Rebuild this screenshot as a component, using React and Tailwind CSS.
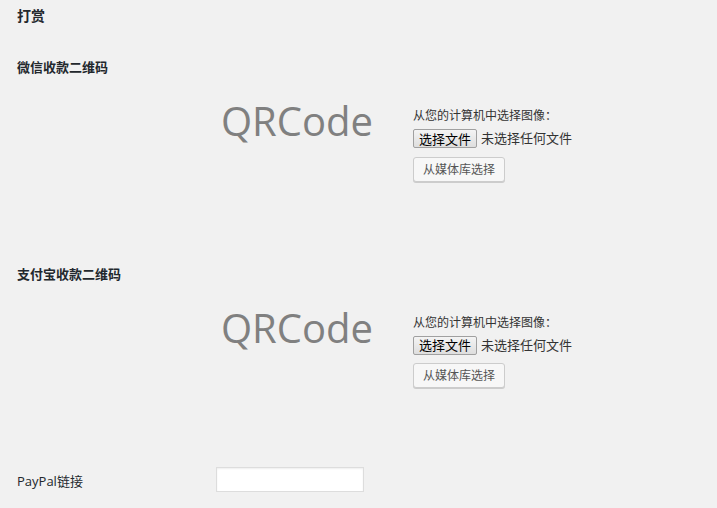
import React from "react";

const QrSection = ({ title }) => {
  return (
    <div>
      <div className="h-[20px] leading-[20px] text-[13px] font-bold">{title}</div>
      <div className="mt-[21px] flex">
        <div className="w-[199px]"></div>
        <div className="w-[197px] pl-[5px] pt-[3px]">
          <div className="text-[40px] leading-[40px] text-[#808080] font-['Open_Sans',sans-serif]">
            QRCode
          </div>
        </div>
        <div className="pt-[8px]">
          <div className="text-[12px] leading-[18px] text-[#333] font-['Noto_Sans_CJK_SC',sans-serif]">从您的计算机中选择图像：</div>
          <div className="mt-[5px] flex items-center gap-[4px] text-[13px]">
            <button className="h-[19px] px-[5px] leading-[16px] border border-[#a0a0a0] rounded-[2px] bg-gradient-to-b from-[#f4f4f4] to-[#dedede] text-black">
              选择文件
            </button>
            <span className="text-[#333]">未选择任何文件</span>
          </div>
          <button className="mt-[8px] h-[25px] w-[92px] text-[12px] leading-[23px] text-[#555] bg-[#f7f7f7] border border-[#ccc] rounded-[3px] shadow-[0_1px_0_#ccc]">
            从媒体库选择
          </button>
        </div>
      </div>
    </div>
  );
};

const App = () => {
  return (
    <div className="min-h-screen bg-[#f1f1f1] px-[17px] text-[#23282d] font-['Open_Sans','Noto_Sans_CJK_SC',sans-serif]">
      <h2 className="pt-[6px] h-[26px] leading-[20px] text-[14px] font-semibold">打赏</h2>
      <div className="mt-[31px]">
        <QrSection title="微信收款二维码" />
      </div>
      <div className="mt-[82px]">
        <QrSection title="支付宝收款二维码" />
      </div>
      <div className="mt-[79px] flex items-center">
        <div className="w-[199px] text-[13px] pt-[4px]">PayPal链接</div>
        <input
          type="text"
          className="w-[148px] h-[25px] bg-white border border-[#ddd] shadow-[inset_0_1px_2px_rgba(0,0,0,0.07)] outline-none"
        />
      </div>
    </div>
  );
};

export default App;
